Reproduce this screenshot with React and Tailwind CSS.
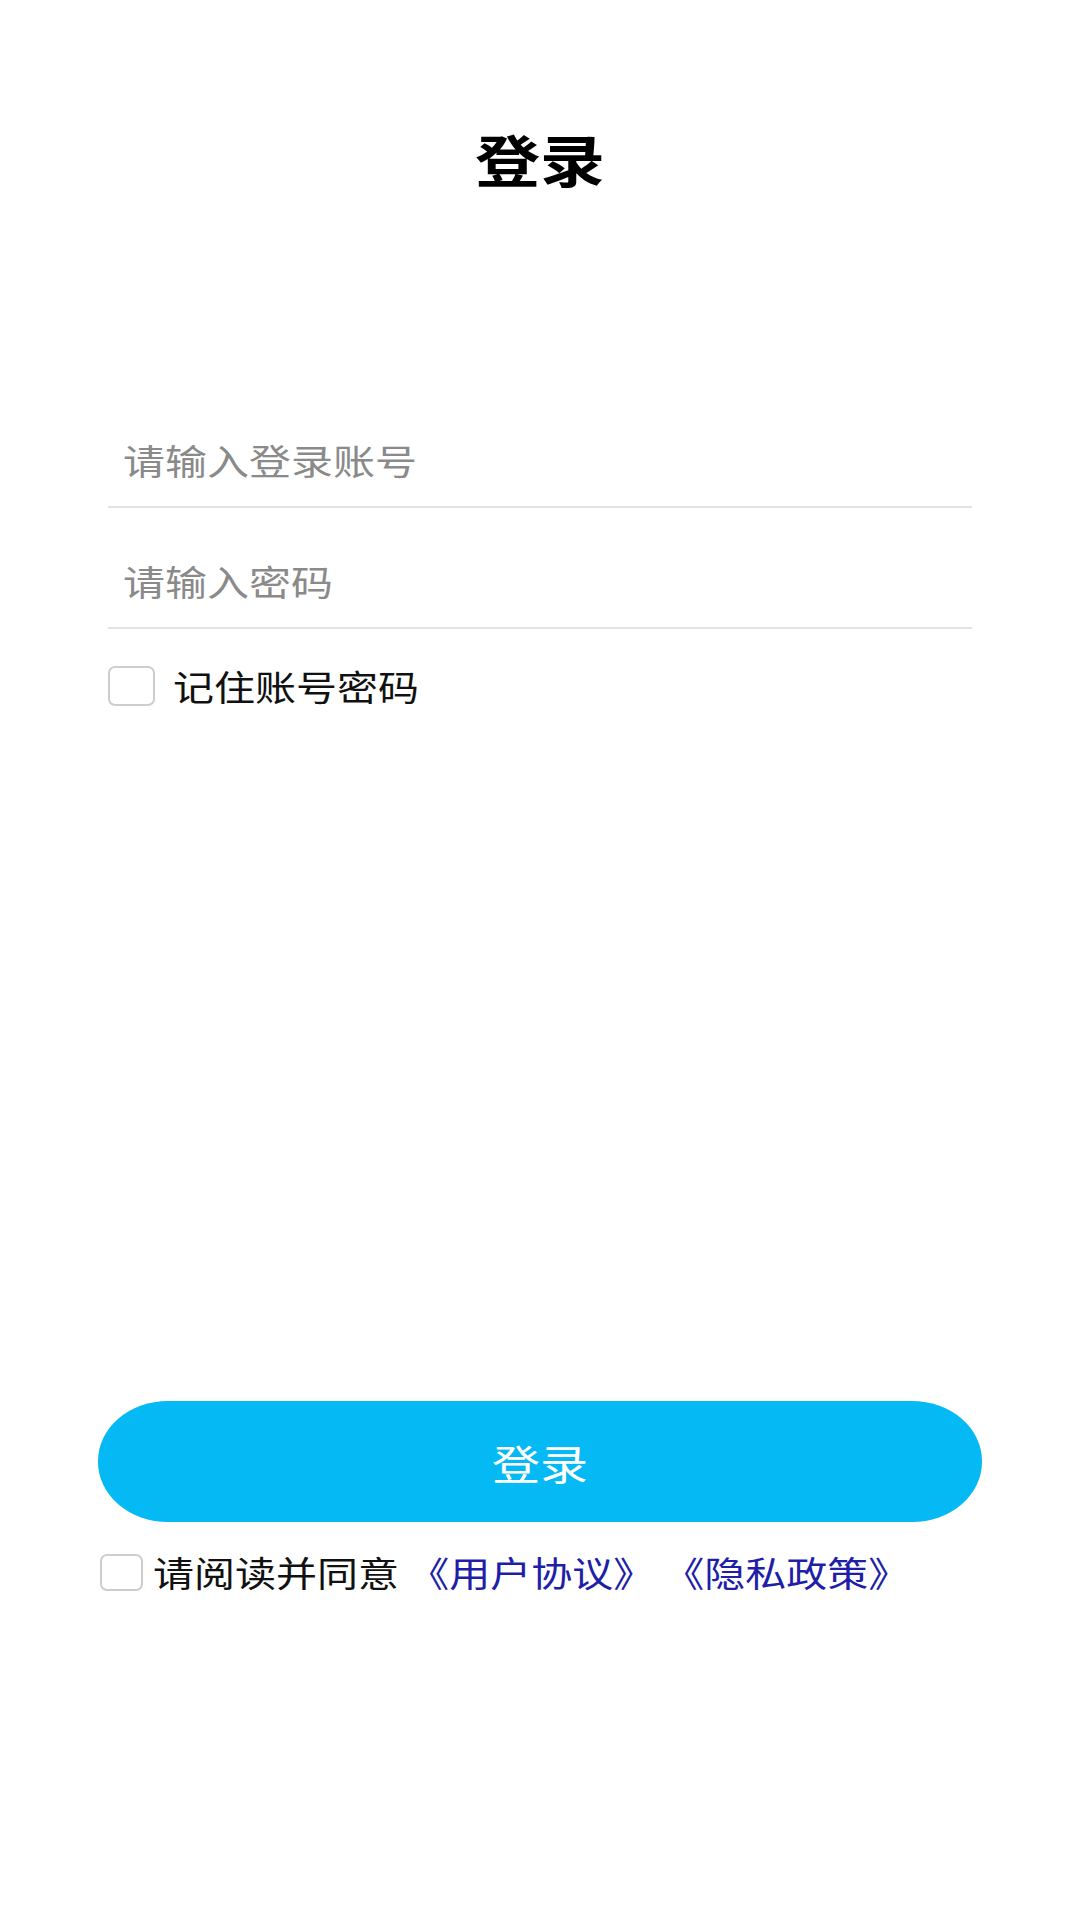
import { useState } from 'react'

const font = { fontFamily: '"Noto Sans CJK SC", "Noto Sans", sans-serif' }

function Box({ checked, onClick, className }) {
  return (
    <button
      type="button"
      onClick={onClick}
      className={`shrink-0 rounded-[7px] border-2 border-[#cdcdcd] bg-white ${checked ? 'bg-[#04b9f4] border-[#04b9f4]' : ''} ${className}`}
    />
  )
}

export default function App() {
  const [remember, setRemember] = useState(false)
  const [agree, setAgree] = useState(false)

  return (
    <div className="w-[1080px] h-[1920px] bg-white flex flex-col" style={font}>
      {/* title */}
      <div className="pt-[118px] text-center">
        <span className="inline-block text-[65px] leading-[80px] font-bold text-black scale-y-85">
          登录
        </span>
      </div>

      {/* form */}
      <div className="mt-[189px] px-[108px]">
        <div className="pt-[25px] border-b-2 border-[#e3e3e3]">
          <input
            className="w-full h-[94px] pl-[15px] text-[42px] text-[#222] outline-none placeholder:text-[#8a8a8a] scale-y-85"
            placeholder="请输入登录账号"
          />
        </div>
        <div className="pt-[25px] border-b-2 border-[#e3e3e3]">
          <input
            type="password"
            className="w-full h-[94px] pl-[15px] text-[42px] text-[#222] outline-none placeholder:text-[#8a8a8a] scale-y-85"
            placeholder="请输入密码"
          />
        </div>
        <div className="mt-[27px] h-[60px] flex items-center">
          <Box checked={remember} onClick={() => setRemember(!remember)} className="w-[47px] h-[40px]" />
          <span className="ml-[18px] inline-block text-[41px] leading-[60px] text-[#111] scale-y-85">
            记住账号密码
          </span>
        </div>
      </div>

      {/* bottom */}
      <div className="mt-auto px-[98px] pb-[328px]">
        <button
          type="button"
          className="w-full h-[121px] rounded-[70px/60px] bg-[#04b9f4] flex items-center justify-center"
        >
          <span className="inline-block text-[48px] leading-[60px] text-white scale-y-85">登录</span>
        </button>
        <div className="mt-[30px] h-[40px] flex items-center">
          <Box checked={agree} onClick={() => setAgree(!agree)} className="ml-[2px] w-[43px] h-[37px]" />
          <span className="ml-[10px] inline-block text-[41px] leading-[40px] whitespace-pre text-[#111] scale-y-85">
            {'请阅读并同意 '}
            <span className="text-[#1e1ea8]">{'《用户协议》 《隐私政策》'}</span>
          </span>
        </div>
      </div>
    </div>
  )
}
